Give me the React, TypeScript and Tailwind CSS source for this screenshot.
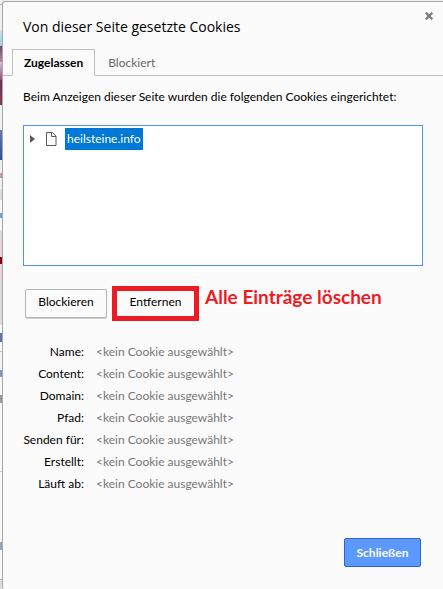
import { useState } from 'react';
import clsx from 'clsx';

const TABS = ['Zugelassen', 'Blockiert'];

const FIELDS = ['Name', 'Content', 'Domain', 'Pfad', 'Senden für', 'Erstellt', 'Läuft ab'];

// Sliver of the web page that stays visible left of the dialog
const PAGE_EDGE = [
  'h-1 bg-[#f0f0f0]',
  'h-px bg-[#b4b4b4]',
  'h-[25px] bg-[#f0f0f0]',
  'h-[16px] bg-linear-to-b from-[#c5e6f5] to-[#a3cbe8]',
  'h-[16px] bg-linear-to-b from-[#7b4560] to-[#b58a9e]',
  'h-[18px] bg-linear-to-b from-[#d9bfd2] to-[#8d4d6c]',
  'h-[25px] bg-linear-to-b from-[#6f3450] to-[#7d3e5c]',
  'h-[25px] bg-[#f2f2f2]',
  'h-[30px] bg-linear-to-b from-[#5a7ab0] to-[#2d549b]',
  'h-[13px] bg-[#f0f0f0]',
  'h-[5px] bg-[#c39aa5]',
  'h-[11px] bg-[#f0f0f0]',
  'h-[11px] bg-[#dddddd]',
  'h-[13px] bg-[#f8f8f8]',
  'h-[5px] bg-[#6fa3cf]',
  'h-[12px] bg-[#f8f8f8]',
  'h-[10px] bg-[#dddddd]',
  'h-[17px] bg-[#ead3d7]',
  'h-[7px] bg-[#7c0a12]',
  'h-[15px] bg-[#ead3d7]',
  'h-[46px] bg-[#dddddd]',
  'h-[8px] bg-[#fafafa]',
  'h-[9px] bg-[#5a77aa]',
  'h-[9px] bg-[#fafafa]',
  'h-px bg-[#c4c4c4]',
  'h-[18px] bg-[#f4f4f4]',
  'h-[7px] bg-[#7d97c0]',
  'h-[18px] bg-[#f8f8f8]',
  'h-[8px] bg-[#999999]',
  'h-[68px] bg-[#f8f8f8]',
  'h-px bg-[#d0d0d0]',
  'h-[70px] bg-[#f8f8f8]',
  'h-[8px] bg-[#93a5c4]',
  'h-[29px] bg-[#f8f8f8]',
  'h-px bg-[#b0b0b0]',
];

function PageEdge() {
  return (
    <div aria-hidden="true" className="flex w-0.5 shrink-0 flex-col bg-[#dddddd]">
      {PAGE_EDGE.map((segment, i) => (
        <div key={i} className={clsx('shrink-0', segment)} />
      ))}
    </div>
  );
}

function FileIcon() {
  return (
    <svg width="11" height="14" viewBox="0 0 11 14" fill="none" stroke="#5a5a5a" aria-hidden="true">
      <path d="M.5.5H6.500l3.500 3.500v9.500H.5z" />
      <path d="M5.500.5v4H10" />
    </svg>
  );
}

export default function App() {
  const [tab, setTab] = useState(TABS[0]);

  return (
    <div className="flex min-h-screen bg-[#eeeeee] font-['Lato','Open_Sans',sans-serif] text-xs text-black">
      <PageEdge />
      <main className="mt-px flex flex-1 flex-col rounded-tl-[3px] rounded-bl-[3px] border-t border-l border-[#a8a8a8] bg-[#fbfbfb]">
        <header className="flex items-start justify-between pt-2 pr-2.5 pl-5">
          <h1 className="pt-[7px] font-['Open_Sans','Noto_Sans',sans-serif] text-[14px] leading-5">
            Von dieser Seite gesetzte Cookies
          </h1>
          <button type="button" aria-label="Dialog schließen" className="pt-0.5">
            <svg width="8" height="8" viewBox="0 0 8 8" stroke="#777777" strokeWidth="2.200" aria-hidden="true">
              <path d="M.7.7l6.600 6.600M7.300.7L.7 7.300" />
            </svg>
          </button>
        </header>

        <div role="tablist" className="mt-3 flex h-[27px] border-b border-[#c0c0c0] pl-[9px]">
          {TABS.map((name) => (
            <button
              key={name}
              type="button"
              role="tab"
              aria-selected={tab === name}
              onClick={() => setTab(name)}
              className={clsx(
                'h-[27px] border',
                tab === name
                  ? 'border-[#c0c0c0] border-b-[#fbfbfb] bg-[#fbfbfb] px-[11px] font-bold'
                  : 'border-transparent px-3 text-[#666666]',
              )}
            >
              {name}
            </button>
          ))}
        </div>

        <section className="px-5 pt-[13px]">
          <p className="leading-4 whitespace-nowrap">
            Beim Anzeigen dieser Seite wurden die folgenden Cookies eingerichtet:
          </p>

          <div role="tree" className="mt-5 h-[141px] border border-[#4d90fe] bg-white px-1.5 py-0.5">
            <div role="treeitem" aria-selected="true" className="flex h-[22px] items-center">
              <svg width="5" height="8" viewBox="0 0 5 8" fill="#5a5a5a" aria-hidden="true">
                <path d="M0 0l5 4-5 4z" />
              </svg>
              <span className="ml-[11px]">
                <FileIcon />
              </span>
              <span className="ml-2 bg-[#0078d7] px-0.5 leading-[22px] text-white">heilsteine.info</span>
            </div>
          </div>

          <div className="mt-[19px] flex items-center gap-[5px] pl-0.5">
            <button
              type="button"
              className="h-[29px] w-[82px] rounded-[2px] border border-[#b4b4b4] bg-[#fbfbfb] pb-0.5 shadow-[0_1px_0_#d0d0d0]"
            >
              Blockieren
            </button>
            <button type="button" className="h-[35px] w-[87px] border-5 border-[#ed1c24] bg-[#fbfbfb] pb-0.5">
              Entfernen
            </button>
            <strong className="ml-px pb-3 text-[19px] leading-6 whitespace-nowrap text-[#ed1c24]">
              Alle Einträge löschen
            </strong>
          </div>
        </section>

        <dl className="mt-5 grid grid-cols-[81px_1fr] gap-x-3 leading-[22px]">
          {FIELDS.map((field) => (
            <div key={field} className="contents">
              <dt className="text-right whitespace-nowrap">{field}:</dt>
              <dd className="text-[#777777]">&lt;kein Cookie ausgewählt&gt;</dd>
            </div>
          ))}
        </dl>

        <footer className="mt-auto flex justify-end pt-8 pr-[22px] pb-[22px]">
          <button
            type="button"
            className="h-[29px] w-[77px] rounded-[2px] border border-[#3064c8] bg-[#5b98ff] font-bold text-white"
          >
            Schließen
          </button>
        </footer>
      </main>
    </div>
  );
}
